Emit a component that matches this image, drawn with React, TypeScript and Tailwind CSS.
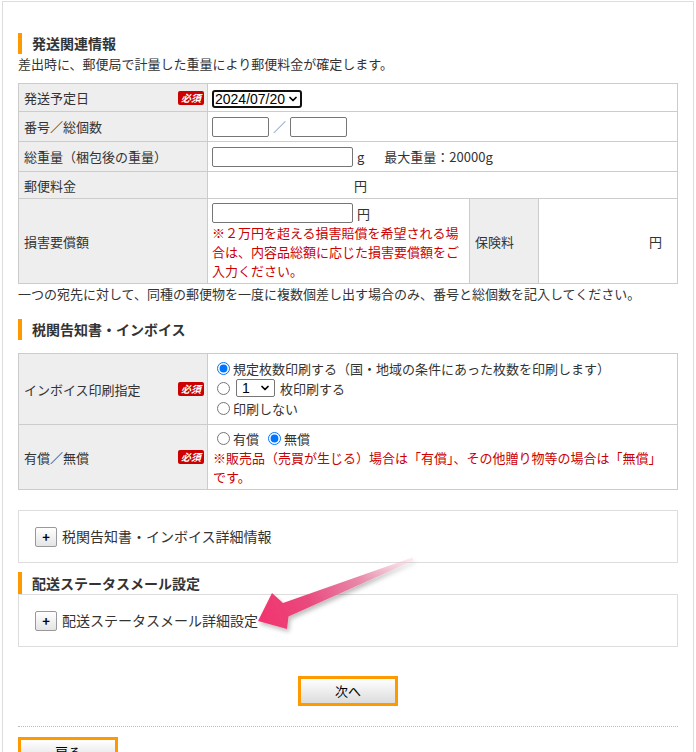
import { ChevronDown } from 'lucide-react';

// 必須 badge shown at the right of label cells
function Required() {
  return (
    <span className="inline-flex h-[14px] w-[26px] items-center justify-center rounded-[2px] bg-[#cc0000] text-[10px] font-bold italic leading-none text-white">
      必須
    </span>
  );
}

function Heading({ children }: { children: React.ReactNode }) {
  return (
    <div className="flex h-[21px] items-center border-l-4 border-[#ff9900] pl-[10px] text-[14px] font-bold text-[#333]">
      {children}
    </div>
  );
}

function LabelCell({ text, required }: { text: string; required?: boolean }) {
  return (
    <td className="border border-[#ccc] bg-[#eee] py-0 pl-[5px] pr-[3px] align-middle">
      <div className="flex items-center justify-between">
        <span>{text}</span>
        {required && <Required />}
      </div>
    </td>
  );
}

function PlusButton() {
  return (
    <span className="inline-flex h-[20px] w-[22px] items-center justify-center rounded-[2px] border border-[#999] bg-gradient-to-b from-white to-[#e4e4e4] text-[13px] font-bold leading-none text-black">
      +
    </span>
  );
}

function OrangeButton({ label }: { label: string }) {
  return (
    <button className="flex h-[30px] w-[100px] items-center justify-center border-[3px] border-[#ff9900] bg-gradient-to-b from-white to-[#dcdcdc] text-[13px] text-black">
      {label}
    </button>
  );
}

function Arrow() {
  return (
    <svg className="pointer-events-none absolute left-0 top-0" width="696" height="752">
      <defs>
        <linearGradient id="arrowFade" gradientUnits="userSpaceOnUse" x1="413" y1="559" x2="262" y2="620">
          <stop offset="0" stopColor="#f6c2d4" stopOpacity="0.3" />
          <stop offset="0.35" stopColor="#e88aab" />
          <stop offset="0.7" stopColor="#e9497d" />
          <stop offset="1" stopColor="#f2346f" />
        </linearGradient>
        <filter id="arrowShadow" x="-20%" y="-20%" width="140%" height="160%">
          <feDropShadow dx="2" dy="3" stdDeviation="2" floodColor="#000" floodOpacity="0.25" />
        </filter>
      </defs>
      <polygon
        points="412.4,557.6 283,603 272,593 258,621 287,629 288.5,616.5 413.6,560.4"
        fill="url(#arrowFade)"
        filter="url(#arrowShadow)"
      />
    </svg>
  );
}

export default function App() {
  const td = 'border border-[#ccc]';
  return (
    <div className="relative h-[752px] w-[696px] overflow-hidden bg-white font-['Noto_Sans_CJK_JP','Noto_Sans',sans-serif] text-[13px] text-[#333]">
      <div className="ml-[2px] mt-[1px] min-h-[800px] w-[692px] border border-[#ddd] px-[15px] pt-[31px]">
        {/* 発送関連情報 */}
        <Heading>発送関連情報</Heading>
        <p className="mt-[1px] leading-[18px]">差出時に、郵便局で計量した重量により郵便料金が確定します。</p>

        <table className="mt-[10px] w-full table-fixed border-collapse leading-[19px]">
          <colgroup>
            <col className="w-[189px]" />
            <col className="w-[262px]" />
            <col className="w-[69px]" />
            <col />
          </colgroup>
          <tbody>
            <tr className="h-[28px]">
              <LabelCell text="発送予定日" required />
              <td className={`${td} px-[4px] py-0`} colSpan={3}>
                <div className="relative top-[1px] inline-flex">
                  <select className="h-[18px] w-[90px] appearance-none rounded-[3px] border-2 border-[#111] bg-white pl-[1px] font-['Liberation_Sans',Arial,sans-serif] text-[14px] leading-none text-black outline-none">
                    <option>2024/07/20</option>
                  </select>
                  <ChevronDown className="pointer-events-none absolute right-[3px] top-[3px] text-black" size={12} strokeWidth={3.5} />
                </div>
              </td>
            </tr>
            <tr className="h-[30px]">
              <LabelCell text="番号／総個数" />
              <td className={`${td} px-[4px] py-0`} colSpan={3}>
                <div className="flex items-center">
                  <input type="text" className="h-[20px] w-[57px] rounded-[2px] border border-[#767676] bg-white" />
                  <span className="mx-[2px] w-[17px] text-center text-[#888]">／</span>
                  <input type="text" className="h-[20px] w-[57px] rounded-[2px] border border-[#767676] bg-white" />
                </div>
              </td>
            </tr>
            <tr className="h-[30px]">
              <LabelCell text="総重量（梱包後の重量）" />
              <td className={`${td} px-[4px] py-0`} colSpan={3}>
                <div className="flex items-center">
                  <input type="text" className="h-[20px] w-[141px] rounded-[2px] border border-[#767676] bg-white" />
                  <span className="ml-[4px]">g</span>
                  <span className="ml-[20px]">最大重量：20000g</span>
                </div>
              </td>
            </tr>
            <tr className="h-[27px]">
              <LabelCell text="郵便料金" />
              <td className={`${td} px-[4px] py-0`} colSpan={3}>
                <span className="ml-[142px]">円</span>
              </td>
            </tr>
            <tr className="h-[85px]">
              <LabelCell text="損害要償額" />
              <td className={`${td} px-[4px] pb-[3px] pt-[4px] align-top`}>
                <div className="flex items-center">
                  <input type="text" className="h-[20px] w-[141px] rounded-[2px] border border-[#767676] bg-white" />
                  <span className="ml-[4px]">円</span>
                </div>
                <p className="text-[#cc0000]">※２万円を超える損害賠償を希望される場合は、内容品総額に応じた損害要償額をご入力ください。</p>
              </td>
              <td className={`${td} bg-[#eee] pl-[5px]`}>保険料</td>
              <td className={`${td} pr-[15px] text-right`}>円</td>
            </tr>
          </tbody>
        </table>
        <p className="mt-[1px] leading-[18px]">一つの宛先に対して、同種の郵便物を一度に複数個差し出す場合のみ、番号と総個数を記入してください。</p>

        {/* 税関告知書・インボイス */}
        <div className="mt-[16px]">
          <Heading>税関告知書・インボイス</Heading>
        </div>
        <table className="mt-[13px] w-full table-fixed border-collapse leading-[19px]">
          <colgroup>
            <col className="w-[189px]" />
            <col />
          </colgroup>
          <tbody>
            <tr className="h-[71px]">
              <LabelCell text="インボイス印刷指定" required />
              <td className={`${td} pb-[6px] pl-[9px] pr-[4px] pt-[4px] align-top`}>
                <label className="flex h-[20px] items-center gap-[3px]">
                  <input type="radio" name="inv" defaultChecked className="m-0 h-[13px] w-[13px]" />
                  <span>規定枚数印刷する（国・地域の条件にあった枚数を印刷します）</span>
                </label>
                <div className="flex h-[20px] items-center">
                  <input type="radio" name="inv" className="m-0 h-[13px] w-[13px]" />
                  <div className="relative ml-[6px] inline-flex">
                    <select className="h-[18px] w-[39px] appearance-none rounded-[2px] border border-[#767676] bg-white pl-[5px] font-['Liberation_Sans',Arial,sans-serif] text-[14px] leading-none text-black outline-none">
                      <option>1</option>
                    </select>
                    <ChevronDown className="pointer-events-none absolute right-[4px] top-[3px] text-black" size={12} strokeWidth={3.5} />
                  </div>
                  <span className="ml-[5px]">枚印刷する</span>
                </div>
                <label className="flex h-[20px] items-center gap-[3px]">
                  <input type="radio" name="inv" className="m-0 h-[13px] w-[13px]" />
                  <span>印刷しない</span>
                </label>
              </td>
            </tr>
            <tr className="h-[65px]">
              <LabelCell text="有償／無償" required />
              <td className={`${td} pb-[3px] pl-[9px] pr-[4px] pt-[3px] align-top`}>
                <div className="flex h-[20px] items-center">
                  <input type="radio" name="paid" className="m-0 h-[13px] w-[13px]" />
                  <span className="ml-[3px]">有償</span>
                  <input type="radio" name="paid" defaultChecked className="m-0 ml-[9px] h-[13px] w-[13px]" />
                  <span className="ml-[3px]">無償</span>
                </div>
                <p className="-ml-[4px] text-[#cc0000]">※販売品（売買が生じる）場合は「有償」、その他贈り物等の場合は「無償」です。</p>
              </td>
            </tr>
          </tbody>
        </table>

        <div className="mt-[20px] flex h-[53px] items-center gap-[5px] border border-[#ddd] pl-[16px] text-[14px]">
          <PlusButton />
          <span>税関告知書・インボイス詳細情報</span>
        </div>

        {/* 配送ステータスメール設定 */}
        <div className="mt-[9px] flex h-[22px] items-center border-l-4 border-[#ff9900] pl-[10px] text-[14px] font-bold text-[#333]">
          配送ステータスメール設定
        </div>
        <div className="flex h-[53px] items-center gap-[5px] border border-[#ddd] pl-[16px] text-[14px]">
          <PlusButton />
          <span>配送ステータスメール詳細設定</span>
        </div>

        <div className="mt-[29px] flex justify-center">
          <OrangeButton label="次へ" />
        </div>

        <div className="mt-[20px] border-t border-dotted border-[#bbb]" />

        <div className="mt-[10px]">
          <OrangeButton label="戻る" />
        </div>
      </div>
      <Arrow />
    </div>
  );
}
